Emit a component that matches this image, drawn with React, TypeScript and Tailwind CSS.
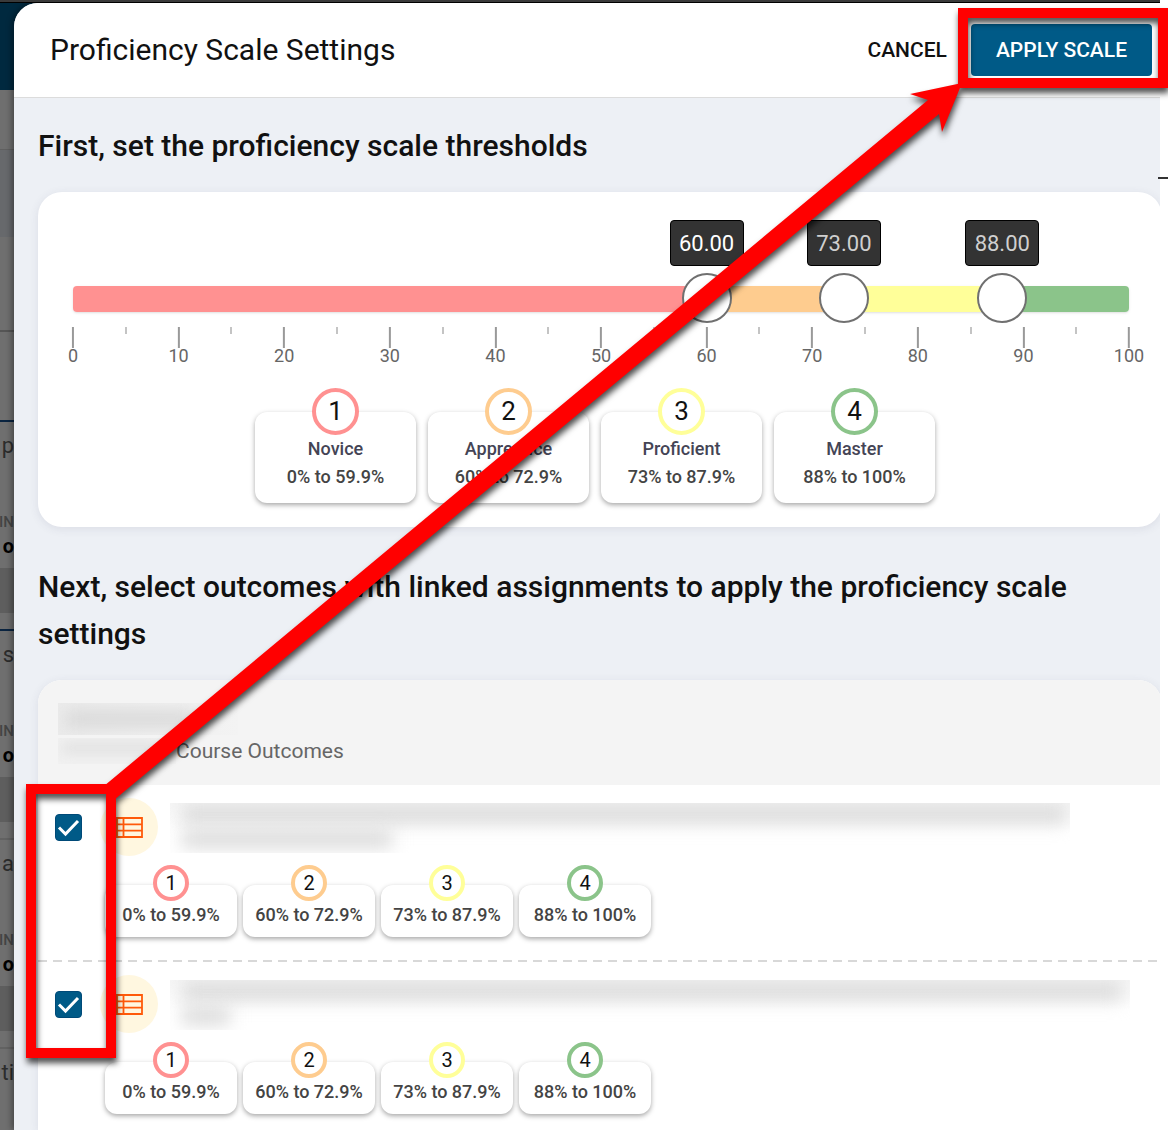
import React, { useState } from 'react';

const levels = [
  { id: 1, name: 'Novice', range: '0% to 59.9%', ring: 'border-[#ff9191]', fill: 'bg-[#ff9191]', width: 60 },
  { id: 2, name: 'Apprentice', range: '60% to 72.9%', ring: 'border-[#fecc8f]', fill: 'bg-[#fecc8f]', width: 13 },
  { id: 3, name: 'Proficient', range: '73% to 87.9%', ring: 'border-[#ffff99]', fill: 'bg-[#ffff99]', width: 15 },
  { id: 4, name: 'Master', range: '88% to 100%', ring: 'border-[#8bc48a]', fill: 'bg-[#8bc48a]', width: 12 },
];

const thresholds = [
  { value: 60, tone: 'text-white' },
  { value: 73, tone: 'text-[#cfcfcf]' },
  { value: 88, tone: 'text-[#cfcfcf]' },
];

const ticks = Array.from({ length: 21 }, (_, i) => i * 5);

export default function App() {
  return (
    <div className="relative flex min-h-screen flex-col overflow-hidden bg-white font-['Roboto',sans-serif] text-[#111]">
      <div className="mr-2 h-[3px] border-b border-black bg-[#3a3a3a]" />
      <div className="mr-2 flex flex-1 overflow-hidden">
        <PageBehind />
        <main className="relative flex min-w-0 flex-1 flex-col rounded-tl-3xl bg-[#edf0f5] shadow-[-2px_0_6px_rgba(0,0,0,0.4)]">
          <header className="flex h-[95px] items-center justify-between rounded-tl-3xl border-b border-[#dcdcdc] bg-white pl-9 pr-2">
            <h1 className="text-[30px] leading-9">Proficiency Scale Settings</h1>
            <div className="flex items-center gap-3">
              <button className="px-3 text-[21px] font-medium leading-7">CANCEL</button>
              <button className="h-[52px] rounded bg-[#005a87] px-[25px] text-[21px] font-medium leading-7 text-white">APPLY SCALE</button>
            </div>
          </header>

          <div className="flex flex-1 flex-col overflow-hidden pl-6 pt-6">
            <h2 className="mb-[23px] text-[30px] font-medium leading-[47px]">First, set the proficiency scale thresholds</h2>
            <section className="-mr-0.5 rounded-3xl bg-white pb-6 pl-[35px] pr-[33px] pt-7 shadow-[0_2px_10px_rgba(60,60,100,0.1)]">
              <ThresholdSlider />
              <div className="mt-[46px] flex justify-center">
                {levels.map((l) => (
                  <div key={l.id} className="mr-3 flex w-[161px] flex-col items-center rounded-xl bg-white pb-3 shadow-[0_2px_5px_rgba(0,0,0,0.35)]">
                    <span className={`-mt-6 flex size-[47px] items-center justify-center rounded-full border-4 bg-white text-[26px] ${l.ring}`}>{l.id}</span>
                    <span className="text-lg font-medium leading-7 text-[#445]">{l.name}</span>
                    <span className="text-lg font-medium leading-7 text-[#444]">{l.range}</span>
                  </div>
                ))}
              </div>
            </section>

            <h2 className="mb-[23px] mt-9 text-[30px] font-medium leading-[47px]">
              Next, select outcomes with linked assignments to apply the proficiency scale settings
            </h2>
            <section className="-mr-0.5 flex-1 overflow-hidden rounded-t-3xl bg-white shadow-[0_2px_10px_rgba(60,60,100,0.1)]">
              <div className="h-[105px] bg-[#f4f4f4] pl-5 pt-[23px]">
                <div className="h-8 w-[180px] overflow-hidden bg-linear-to-r from-[#ebebeb] to-[#f3f3f3] p-2">
                  <div className="h-4 w-32 bg-[#d8d8d8] blur-[8px]" />
                </div>
                <div className="mt-0.5 flex items-center">
                  <div className="h-[26px] w-[118px] overflow-hidden bg-[#f1f1f1] p-1">
                    <div className="h-3 w-24 bg-[#e2e2e2] blur-[6px]" />
                  </div>
                  <span className="text-[21px] leading-7 text-[#666]">Course Outcomes</span>
                </div>
              </div>
              <OutcomeRow box="max-w-[900px]" first="w-[884px]" second="w-[210px]" label="Select first outcome" />
              <div className="h-[2px] bg-[repeating-linear-gradient(90deg,#d8d8d8_0_9px,transparent_9px_15px)]" />
              <OutcomeRow box="max-w-[960px]" first="w-[940px]" second="w-12" label="Select second outcome" />
            </section>
          </div>
        </main>
      </div>
      <div className="absolute right-0 top-[177px] h-0.5 w-2.5 bg-[#333]" />
      <Callouts />
    </div>
  );
}

// Dimmed page that the drawer covers
function PageBehind() {
  return (
    <aside className="-mr-6 w-[38px] shrink-0 bg-[#6f6f6f] text-[#2c2c2c]" aria-hidden="true">
      <div className="h-[87px] bg-[#00293f]" />
      <div className="h-[60px] border-b border-[#606060]" />
      <div className="h-[87px] bg-[#67696c]" />
      <div className="h-[95px] border-b-2 border-[#555]" />
      <div className="h-[88px]" />
      <StripItem text="p" line="border-[#0a2440]" />
      <StripItem text="s" line="border-[#0a2440]" />
      <StripItem text="a" line="border-[#626262]" />
      <div className="flex w-3.5 justify-end border-t-2 border-[#626262] pt-2">
        <span className="text-[22px] leading-8">ti</span>
      </div>
    </aside>
  );
}

function StripItem({ text, line }: any) {
  return (
    <div className={`flex h-[209px] w-3.5 flex-col items-end border-t-2 ${line}`}>
      <span className="mt-2 text-[22px] leading-8">{text}</span>
      <span className="mt-12 text-[15px] font-medium leading-6 text-[#444]">IN</span>
      <span className="text-xl font-bold leading-6 text-black">o</span>
      <div className="mt-2.5 h-[45px] w-full shrink-0 bg-[#5e5e5e]" />
    </div>
  );
}

function ThresholdSlider() {
  const [values, setValues] = useState(thresholds.map((t) => t.value));
  return (
    <div className="relative pt-[66px]">
      {thresholds.map((t, i) => (
        <output
          key={t.value}
          className={`absolute top-0 flex h-[46px] w-[74px] -translate-x-1/2 items-center justify-center rounded-sm border border-black bg-[#333] text-[22px] ${t.tone}`}
          style={{ left: `${values[i]}%` }}
        >
          {values[i].toFixed(2)}
        </output>
      ))}
      <div className="relative">
        <div className="flex h-[26px] overflow-hidden rounded shadow-sm">
          {levels.map((l) => (
            <div key={l.id} className={l.fill} style={{ width: `${l.width}%` }} />
          ))}
        </div>
        {thresholds.map((t, i) => (
          <input
            key={t.value}
            type="range"
            aria-label={`Threshold ${i + 1}`}
            value={values[i]}
            onChange={(e) => setValues(values.map((v, n) => (n === i ? Number(e.target.value) : v)))}
            className="pointer-events-none absolute -left-[25px] -top-[13px] h-[50px] w-[calc(100%+50px)] appearance-none bg-transparent [&::-webkit-slider-thumb]:pointer-events-auto [&::-webkit-slider-thumb]:size-[50px] [&::-webkit-slider-thumb]:appearance-none [&::-webkit-slider-thumb]:rounded-full [&::-webkit-slider-thumb]:border-2 [&::-webkit-slider-thumb]:border-solid [&::-webkit-slider-thumb]:border-[#707070] [&::-webkit-slider-thumb]:bg-white"
          />
        ))}
      </div>
      <div className="relative mt-[15px] h-[39px]">
        {ticks.map((t) => (
          <div key={t} className="absolute top-0 flex -translate-x-1/2 flex-col items-center" style={{ left: `${t}%` }}>
            {t % 10 === 0 ? (
              <>
                <div className="h-[21px] w-0.5 bg-[#999]" />
                <span className="text-lg leading-4 text-[#666]">{t}</span>
              </>
            ) : (
              <div className="h-[7px] w-0.5 bg-[#c4c4c4]" />
            )}
          </div>
        ))}
      </div>
    </div>
  );
}

function OutcomeRow({ box, first, second, label }: any) {
  return (
    <div className="flex pb-[23px] pl-[17px] last:pb-0">
      <label className="mt-[29px] grid size-[27px] shrink-0">
        <input
          type="checkbox"
          defaultChecked
          aria-label={label}
          className="peer col-start-1 row-start-1 size-[27px] appearance-none rounded-sm border border-[#004a78] bg-white checked:bg-[#005a87]"
        />
        <svg viewBox="0 0 27 27" className="pointer-events-none col-start-1 row-start-1 hidden size-[27px] peer-checked:block" fill="none" stroke="#fff" strokeWidth="3">
          <path d="M4 13.5l6.5 6.5L23 7" />
        </svg>
      </label>
      <div className="ml-[18px] mt-[13px] flex size-[58px] shrink-0 items-center justify-center rounded-full bg-[#fff7e0]">
        <svg viewBox="0 0 27 21" className="h-[21px] w-[27px]" fill="none" stroke="#ff5a0a" strokeWidth="1.8">
          <path d="M1 1h25v19H1zM7.5 1v19M1 7.3h25M1 13.7h25" />
        </svg>
      </div>
      <div className="-ml-[53px] flex min-w-0 flex-1 flex-col">
        <div className={`ml-[65px] mr-8 mt-[18px] h-[50px] overflow-hidden bg-linear-to-b from-[#f6f6f6] to-white to-60% pl-3 ${box}`}>
          <div className={`mt-0.5 h-[18px] max-w-full bg-[#d9d9d9] blur-[9px] ${first}`} />
          <div className={`mt-2 h-4 bg-[#d6d6d6] blur-[9px] ${second}`} />
        </div>
        <div className="mt-8 flex gap-1.5">
          {levels.map((l) => (
            <div key={l.id} className="flex h-[52px] w-[132px] flex-col items-center rounded-xl bg-white shadow-[0_2px_5px_rgba(0,0,0,0.35)]">
              <span className={`-mt-5 flex size-9 shrink-0 items-center justify-center rounded-full border-4 bg-white text-xl ${l.ring}`}>{l.id}</span>
              <span className="text-lg font-medium leading-7 text-[#444]">{l.range}</span>
            </div>
          ))}
        </div>
      </div>
    </div>
  );
}

// Red boxes and the arrow that joins them
function Callouts() {
  return (
    <svg viewBox="0 0 1168 1130" className="pointer-events-none absolute left-0 top-0 h-[1130px] w-[1168px] drop-shadow-[1px_5px_3px_rgba(0,0,0,0.7)]" aria-hidden="true">
      <g fill="none" stroke="#f00" strokeWidth="10">
        <rect x="963" y="13" width="200" height="70" />
        <rect x="31" y="789" width="80" height="264" />
      </g>
      <path d="M104 786L928 100L910 94L962 83L942 132L939 114L114 800Z" fill="#f00" />
    </svg>
  );
}
